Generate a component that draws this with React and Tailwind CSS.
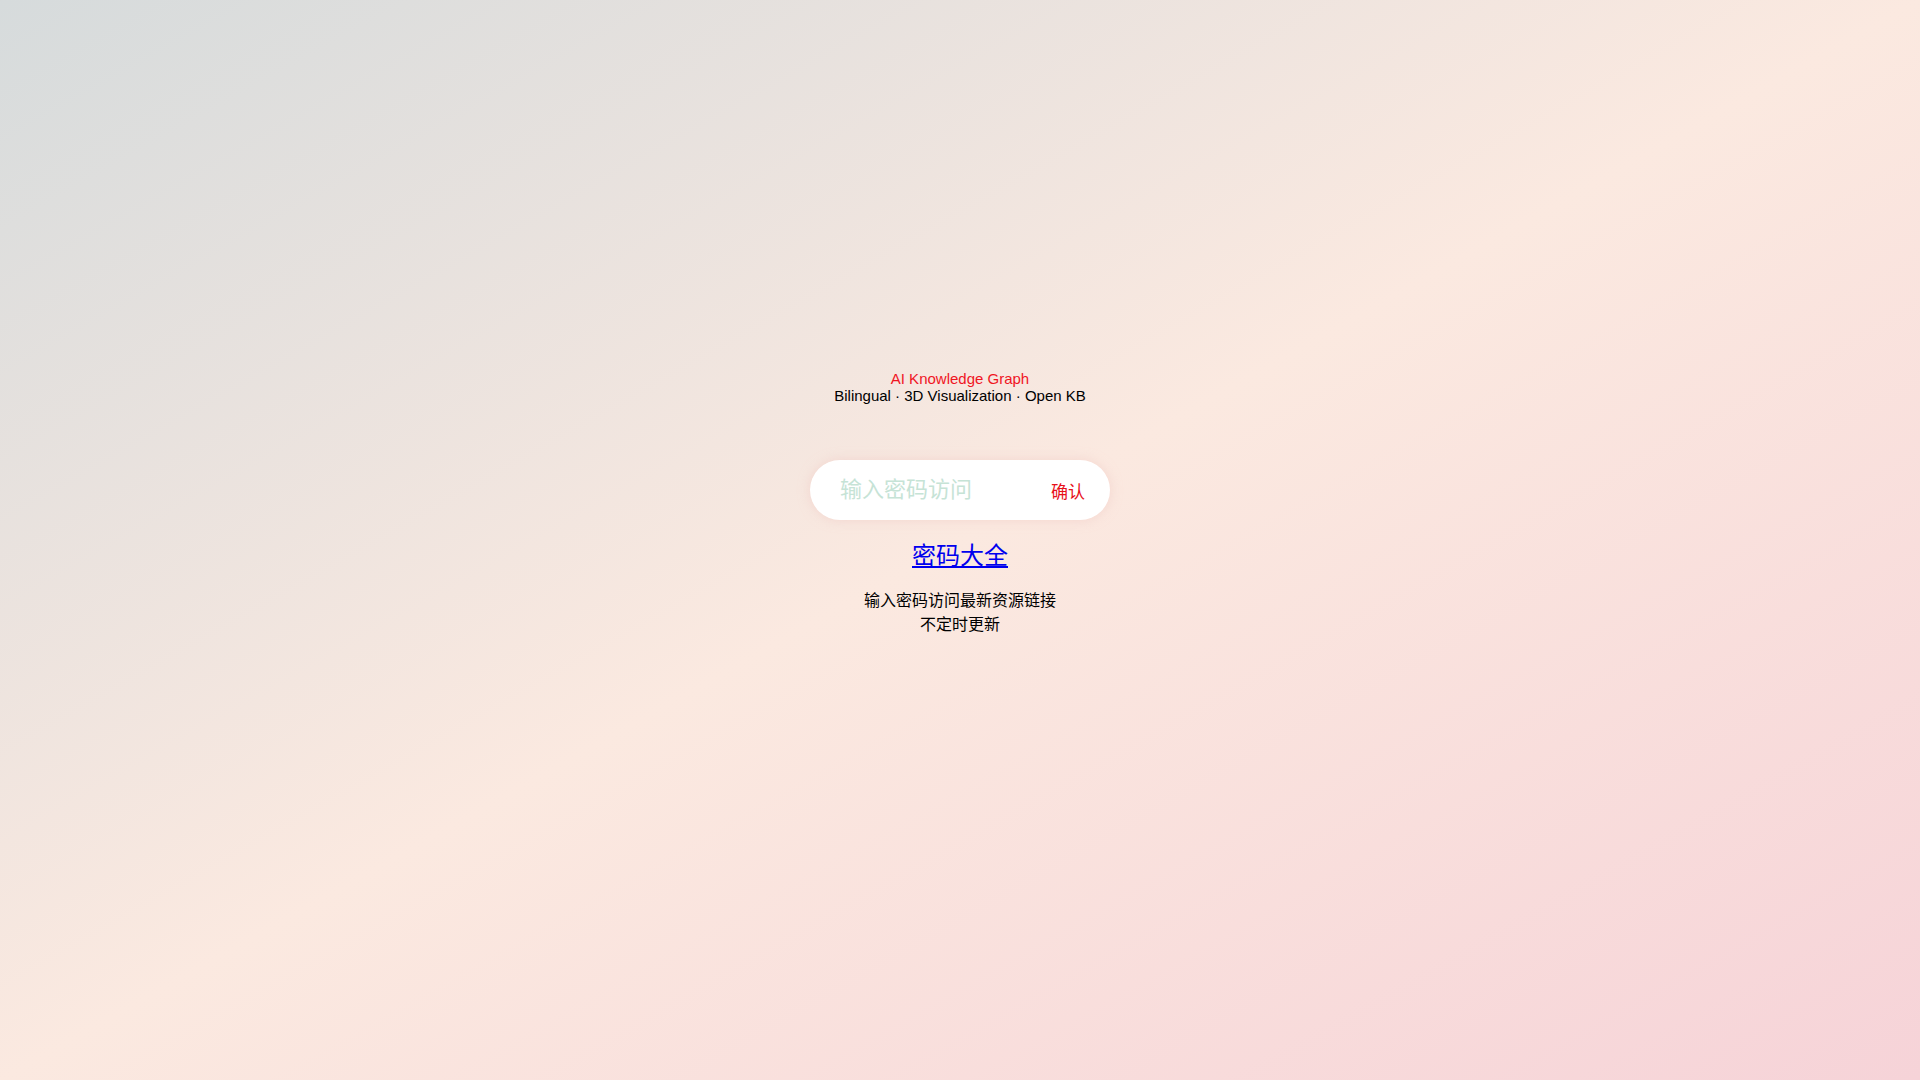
import React, { useState } from 'react';

const App = () => {
  const [password, setPassword] = useState('');

  return (
    <div className="min-h-screen w-full bg-linear-to-br from-[#d6dbdc] via-[#fbe9e0] to-[#f6d3d8] flex flex-col items-center pt-[370px] font-['Liberation_Sans','Noto_Sans_CJK_SC',sans-serif]">
      <div className="text-center">
        <p className="text-[15px] leading-[17px] text-[#f0151f]">AI Knowledge Graph</p>
        <p className="text-[15px] leading-[17px] text-black">Bilingual · 3D Visualization · Open KB</p>
      </div>

      <div className="mt-[56px] w-[300px] h-[60px] bg-white rounded-full flex items-center pl-[30px] pr-[25px] shadow-[0_0_12px_rgba(240,200,195,0.6)]">
        <input
          type="password"
          value={password}
          onChange={(e) => setPassword(e.target.value)}
          placeholder="输入密码访问"
          className="flex-1 min-w-0 mb-[6px] bg-transparent outline-none text-[22px] text-gray-700 placeholder:text-[#c6e3d6] font-['Noto_Sans_CJK_SC',sans-serif]"
        />
        <button className="text-[17px] text-[#e8101a] mt-[1px] font-['Noto_Sans_CJK_SC',sans-serif]">确认</button>
      </div>

      <a href="#" className="mt-[20px] text-[24px] leading-[28px] text-[#0000ee] underline font-['Noto_Sans_CJK_SC',sans-serif]">
        密码大全
      </a>

      <div className="mt-[19px] text-center text-[16px] leading-[24px] text-black font-['Noto_Sans_CJK_SC',sans-serif]">
        <p>输入密码访问最新资源链接</p>
        <p>不定时更新</p>
      </div>
    </div>
  );
};

export default App;
